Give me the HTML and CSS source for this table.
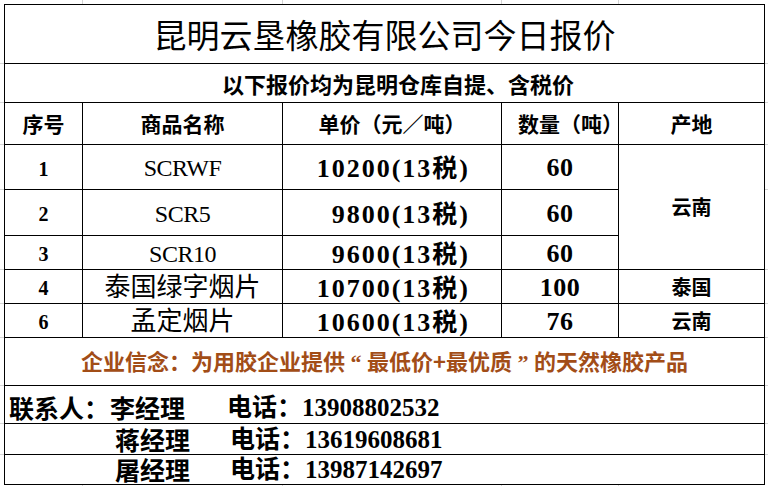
FILE: index.html
```html
<!DOCTYPE html>
<html lang="zh-CN">
<head>
<meta charset="utf-8">
<title>昆明云垦橡胶有限公司今日报价</title>
<link rel="stylesheet" href="styles.css">
</head>
<body>
<div class="sheet">
  <table class="quote">
    <colgroup>
      <col class="c-no"><col class="c-name"><col class="c-price"><col class="c-qty"><col class="c-origin">
    </colgroup>
    <tr class="r-title"><td colspan="5" class="title">昆明云垦橡胶有限公司今日报价</td></tr>
    <tr class="r-sub"><td colspan="5" class="sub">以下报价均为昆明仓库自提、含税价</td></tr>
    <tr class="r-head">
      <td class="head">序号</td>
      <td class="head">商品名称</td>
      <td class="head">单价（元／吨）</td>
      <td class="head qty-head">数量（吨）</td>
      <td class="head">产地</td>
    </tr>
    <tr class="r-d1">
      <td class="no">1</td>
      <td class="name latin">SCRWF</td>
      <td class="price">10200(13<span class="cj">税</span>)</td>
      <td class="qty">60</td>
      <td class="origin" rowspan="3">云南</td>
    </tr>
    <tr class="r-d2">
      <td class="no">2</td>
      <td class="name latin">SCR5</td>
      <td class="price">9800(13<span class="cj">税</span>)</td>
      <td class="qty">60</td>
    </tr>
    <tr class="r-d3">
      <td class="no">3</td>
      <td class="name latin">SCR10</td>
      <td class="price">9600(13<span class="cj">税</span>)</td>
      <td class="qty">60</td>
    </tr>
    <tr class="r-d4">
      <td class="no">4</td>
      <td class="name">泰国绿字烟片</td>
      <td class="price">10700(13<span class="cj">税</span>)</td>
      <td class="qty">100</td>
      <td class="origin">泰国</td>
    </tr>
    <tr class="r-d5">
      <td class="no">6</td>
      <td class="name">孟定烟片</td>
      <td class="price">10600(13<span class="cj">税</span>)</td>
      <td class="qty">76</td>
      <td class="origin">云南</td>
    </tr>
    <tr class="r-slogan"><td colspan="5" class="slogan">企业信念：为用胶企业提供<span class="q">“</span>最低价+最优质<span class="q">”</span>的天然橡胶产品</td></tr>
    <tr class="r-c1"><td colspan="5" class="contact">
      <div class="line first"><span class="label">联系人：</span><span class="person">李经理</span><span class="tel">电话：<span class="digits">13908802532</span></span></div>
    </td></tr>
    <tr class="r-c2"><td colspan="5" class="contact">
      <div class="line"><span class="label"></span><span class="person">蒋经理</span><span class="tel">电话：<span class="digits">13619608681</span></span></div>
    </td></tr>
    <tr class="r-c3"><td colspan="5" class="contact">
      <div class="line"><span class="label"></span><span class="person">屠经理</span><span class="tel">电话：<span class="digits">13987142697</span></span></div>
    </td></tr>
  </table>
</div>
</body>
</html>
```
FILE: styles.css
```css
html, body { margin: 0; padding: 0; }
body { width: 768px; height: 486px; overflow: hidden; background: #fff; }

.sheet {
  width: 768px;
  height: 486px;
  box-sizing: border-box;
  padding: 4px 0 0 4px;
  background:
    linear-gradient(#d4d4d4, #d4d4d4) 82px 0 / 1px 100% no-repeat,
    linear-gradient(#d4d4d4, #d4d4d4) 282px 0 / 1px 100% no-repeat,
    linear-gradient(#d4d4d4, #d4d4d4) 501px 0 / 1px 100% no-repeat,
    linear-gradient(#d4d4d4, #d4d4d4) 618px 0 / 1px 100% no-repeat,
    linear-gradient(#d4d4d4, #d4d4d4) 0 63px / 100% 1px no-repeat,
    linear-gradient(#d4d4d4, #d4d4d4) 0 102px / 100% 1px no-repeat,
    linear-gradient(#d4d4d4, #d4d4d4) 0 144px / 100% 1px no-repeat,
    linear-gradient(#d4d4d4, #d4d4d4) 0 189px / 100% 1px no-repeat,
    linear-gradient(#d4d4d4, #d4d4d4) 0 269px / 100% 1px no-repeat,
    linear-gradient(#d4d4d4, #d4d4d4) 0 303px / 100% 1px no-repeat,
    linear-gradient(#d4d4d4, #d4d4d4) 0 337px / 100% 1px no-repeat,
    linear-gradient(#d4d4d4, #d4d4d4) 0 385px / 100% 1px no-repeat,
    linear-gradient(#d4d4d4, #d4d4d4) 0 423px / 100% 1px no-repeat,
    linear-gradient(#d4d4d4, #d4d4d4) 0 454px / 100% 1px no-repeat,
    #fff;
}

.quote {
  border-collapse: separate;
  border-spacing: 0;
  table-layout: fixed;
  width: 761px;
  border-top: 1px solid #000;
  border-left: 1px solid #000;
  background: #fff;
  color: #000;
  font-family: "Liberation Serif", "Noto Sans CJK SC", serif;
}
:where(.quote td) {
  box-sizing: border-box;
  border-right: 1px solid #000;
  border-bottom: 1px solid #000;
  padding: 0;
  text-align: center;
  vertical-align: middle;
  white-space: nowrap;
  line-height: 1;
}

.c-no { width: 78px; }
.c-name { width: 200px; }
.c-price { width: 219px; }
.c-qty { width: 117px; }
.c-origin { width: 146px; }

.r-title td { height: 59px; }
.r-sub td { height: 39px; }
.r-head td { height: 42px; }
.r-d1 td { height: 45px; }
.r-d2 td { height: 46px; }
.r-d3 td, .r-d4 td, .r-d5 td { height: 34px; }
.r-slogan td { height: 48px; }
.r-c1 td { height: 38px; }
.r-c2 td { height: 31px; }
.r-c3 td { height: 28px; }

.cj, .title, .sub, .head, .origin, .slogan, .label, .person, .tel {
  font-family: "Noto Sans CJK SC", sans-serif;
}

.title { font-size: 33px; font-weight: 400; }
.sub { font-size: 22px; font-weight: 700; padding-left: 27px; }
.head { font-size: 21px; font-weight: 700; }
.qty-head { text-align: left; padding-left: 16px; overflow: visible; }

.no { font-size: 20px; font-weight: 700; padding-top: 3px; }
.name { font-size: 26px; font-weight: 400; padding-top: 2px; }
.name.latin { font-size: 24px; letter-spacing: -0.5px; }
.price { font-size: 26px; font-weight: 700; text-align: right; padding-right: 31px; padding-top: 2px; letter-spacing: 2px; }
.price .cj { font-size: 25px; }
.qty { font-size: 26px; font-weight: 700; padding-top: 2px; letter-spacing: 0.5px; }
.origin { font-size: 20px; font-weight: 700; }

.slogan { font-size: 22px; font-weight: 700; color: #a24d17; }
.slogan .q { font-family: "Liberation Serif", serif; display: inline-block; width: 22px; }

.contact { vertical-align: bottom; text-align: left; }
.line { display: flex; align-items: flex-end; font-size: 25px; font-weight: 700; padding-bottom: 2px; }
.label { display: inline-block; width: 101px; padding-left: 4px; }
.line .person { display: inline-block; width: 117px; }
.line:not(.first) .person { margin-left: 5px; width: 115px; }
.tel { display: inline-block; }
.tel .digits { font-family: "Liberation Serif", serif; font-size: 25px; }
.r-c1 .line { padding-bottom: 3px; }
```
